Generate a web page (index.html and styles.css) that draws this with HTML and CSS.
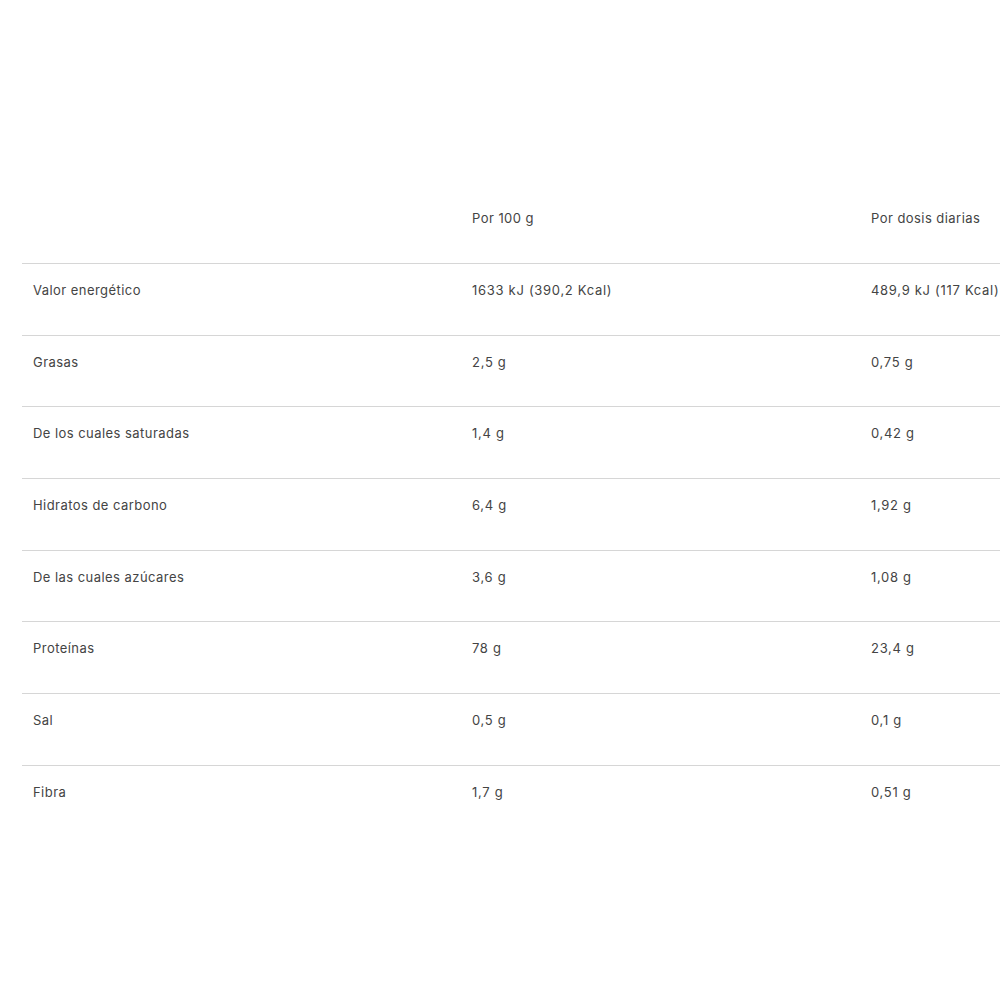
FILE: index.html
```html
<!DOCTYPE html>
<html lang="es">
<head>
<meta charset="utf-8">
<link rel="stylesheet" href="styles.css">
</head>
<body>
<div class="wrap">
  <table class="nutri">
    <thead>
      <tr><th></th><th>Por 100 g</th><th>Por dosis diarias</th></tr>
    </thead>
    <tbody>
      <tr><td>Valor energético</td><td class="num">1633 kJ (390,2 Kcal)</td><td class="num">489,9 kJ (117 Kcal)</td></tr>
      <tr><td>Grasas</td><td class="num">2,5 g</td><td class="num">0,75 g</td></tr>
      <tr><td>De los cuales saturadas</td><td class="num">1,4 g</td><td class="num">0,42 g</td></tr>
      <tr><td>Hidratos de carbono</td><td class="num">6,4 g</td><td class="num">1,92 g</td></tr>
      <tr><td>De las cuales azúcares</td><td class="num">3,6 g</td><td class="num">1,08 g</td></tr>
      <tr><td>Proteínas</td><td class="num">78 g</td><td class="num">23,4 g</td></tr>
      <tr><td>Sal</td><td class="num">0,5 g</td><td class="num">0,1 g</td></tr>
      <tr><td>Fibra</td><td class="num">1,7 g</td><td class="num">0,51 g</td></tr>
    </tbody>
  </table>
</div>
</body>
</html>
```
FILE: styles.css
```css
html, body {
  margin: 0;
  padding: 0;
  background: #fff;
  overflow: hidden;
}
.wrap {
  padding: 200px 0 0 22px;
}
.nutri {
  border-collapse: collapse;
  width: 1240px;
  table-layout: fixed;
  font-family: Inter, "Liberation Sans", sans-serif;
  font-size: 13px;
  letter-spacing: 0.45px;
  color: #444;
}
.nutri th, .nutri td {
  text-align: left;
  font-weight: 400;
  vertical-align: top;
  padding: 10px 11px 0;
  line-height: 16px;
  white-space: nowrap;
}
.nutri .num { letter-spacing: 0.7px; }
.nutri th:nth-child(1), .nutri td:nth-child(1) { width: 417px; }
.nutri th:nth-child(2), .nutri td:nth-child(2) { width: 377px; }
.nutri thead th {
  height: 53px;
  padding-top: 10px;
  box-sizing: content-box;
}
.nutri thead tr { border-bottom: 1px solid #d6d6d6; }
.nutri tbody td {
  height: 52.7px;
  padding-top: 18px;
  box-sizing: content-box;
}
.nutri tbody tr { border-bottom: 1px solid #d6d6d6; }
.nutri tbody tr:last-child { border-bottom: none; }
```
